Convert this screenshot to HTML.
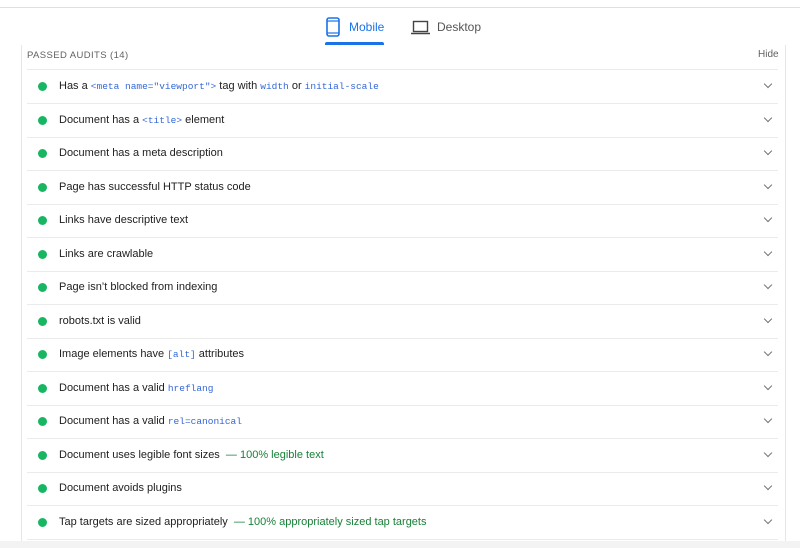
<!DOCTYPE html><html><head><style>
body{margin:0;width:800px;height:548px;background:#fff;font-family:"Liberation Sans",sans-serif;position:relative;overflow:hidden}
.abs{position:absolute}
.row{position:absolute;left:27px;width:751px;height:33px;border-bottom:1px solid #ebebeb;font-size:11px;color:#212121}
.row .dot{position:absolute;left:11px;top:12px;width:9px;height:9px;border-radius:50%;background:#18b663}
.row .t{position:absolute;left:32px;top:10px;white-space:nowrap}
.row .ch{position:absolute;right:7px;top:11px;width:5px;height:5px;border-right:1px solid #757575;border-bottom:1px solid #757575;transform:rotate(45deg)}
code{font-family:"Liberation Mono",monospace;font-size:9.5px;color:#3367d6}
.g{color:#188038}
</style></head><body>
<div class="abs" style="left:0;top:7px;width:800px;height:1px;background:#e0e0e0"></div>
<svg class="abs" style="left:326px;top:17px" width="14" height="20" viewBox="0 0 14 20"><rect x="1" y="1" width="12" height="18" rx="2" fill="none" stroke="#1a73e8" stroke-width="1.6"/><line x1="1" y1="4" x2="13" y2="4" stroke="#1a73e8" stroke-width="1.2"/><line x1="1" y1="16" x2="13" y2="16" stroke="#1a73e8" stroke-width="1.2"/></svg>
<div class="abs" style="left:349px;top:20px;font-size:12px;color:#1a73e8">Mobile</div>
<div class="abs" style="left:325px;top:42px;width:59px;height:3px;background:#1a73e8;border-radius:2px 2px 0 0"></div>
<svg class="abs" style="left:411px;top:20px" width="19" height="15" viewBox="0 0 19 15"><rect x="2.5" y="1.5" width="14" height="10" fill="none" stroke="#444" stroke-width="1.4"/><line x1="0" y1="13.5" x2="19" y2="13.5" stroke="#444" stroke-width="1.6"/></svg>
<div class="abs" style="left:437px;top:20px;font-size:12px;color:#555">Desktop</div>
<div class="abs" style="left:21px;top:45px;width:1px;height:503px;background:#e6e6e6"></div>
<div class="abs" style="left:785px;top:45px;width:1px;height:503px;background:#e6e6e6"></div>
<div class="abs" style="left:27px;top:50px;font-size:9.5px;color:#616161;letter-spacing:.4px">PASSED AUDITS (14)</div>
<div class="abs" style="left:758px;top:49px;font-size:10px;color:#616161">Hide</div>
<div class="abs" style="left:27px;top:69px;width:751px;height:1px;background:#ebebeb"></div>
<div class="row" style="top:70px"><div class="dot"></div><div class="t">Has a <code>&lt;meta name="viewport"&gt;</code> tag with <code>width</code> or <code>initial-scale</code></div><div class="ch"></div></div>
<div class="row" style="top:104px"><div class="dot"></div><div class="t">Document has a <code>&lt;title&gt;</code> element</div><div class="ch"></div></div>
<div class="row" style="top:137px"><div class="dot"></div><div class="t">Document has a meta description</div><div class="ch"></div></div>
<div class="row" style="top:171px"><div class="dot"></div><div class="t">Page has successful HTTP status code</div><div class="ch"></div></div>
<div class="row" style="top:204px"><div class="dot"></div><div class="t">Links have descriptive text</div><div class="ch"></div></div>
<div class="row" style="top:238px"><div class="dot"></div><div class="t">Links are crawlable</div><div class="ch"></div></div>
<div class="row" style="top:271px"><div class="dot"></div><div class="t">Page isn’t blocked from indexing</div><div class="ch"></div></div>
<div class="row" style="top:305px"><div class="dot"></div><div class="t">robots.txt is valid</div><div class="ch"></div></div>
<div class="row" style="top:338px"><div class="dot"></div><div class="t">Image elements have <code>[alt]</code> attributes</div><div class="ch"></div></div>
<div class="row" style="top:372px"><div class="dot"></div><div class="t">Document has a valid <code>hreflang</code></div><div class="ch"></div></div>
<div class="row" style="top:405px"><div class="dot"></div><div class="t">Document has a valid <code>rel=canonical</code></div><div class="ch"></div></div>
<div class="row" style="top:439px"><div class="dot"></div><div class="t">Document uses legible font sizes &nbsp;<span class="g">— 100% legible text</span></div><div class="ch"></div></div>
<div class="row" style="top:472px"><div class="dot"></div><div class="t">Document avoids plugins</div><div class="ch"></div></div>
<div class="row" style="top:506px"><div class="dot"></div><div class="t">Tap targets are sized appropriately &nbsp;<span class="g">— 100% appropriately sized tap targets</span></div><div class="ch"></div></div>
<div class="abs" style="left:0;top:541px;width:800px;height:7px;background:#f3f3f3"></div>
</body></html>
